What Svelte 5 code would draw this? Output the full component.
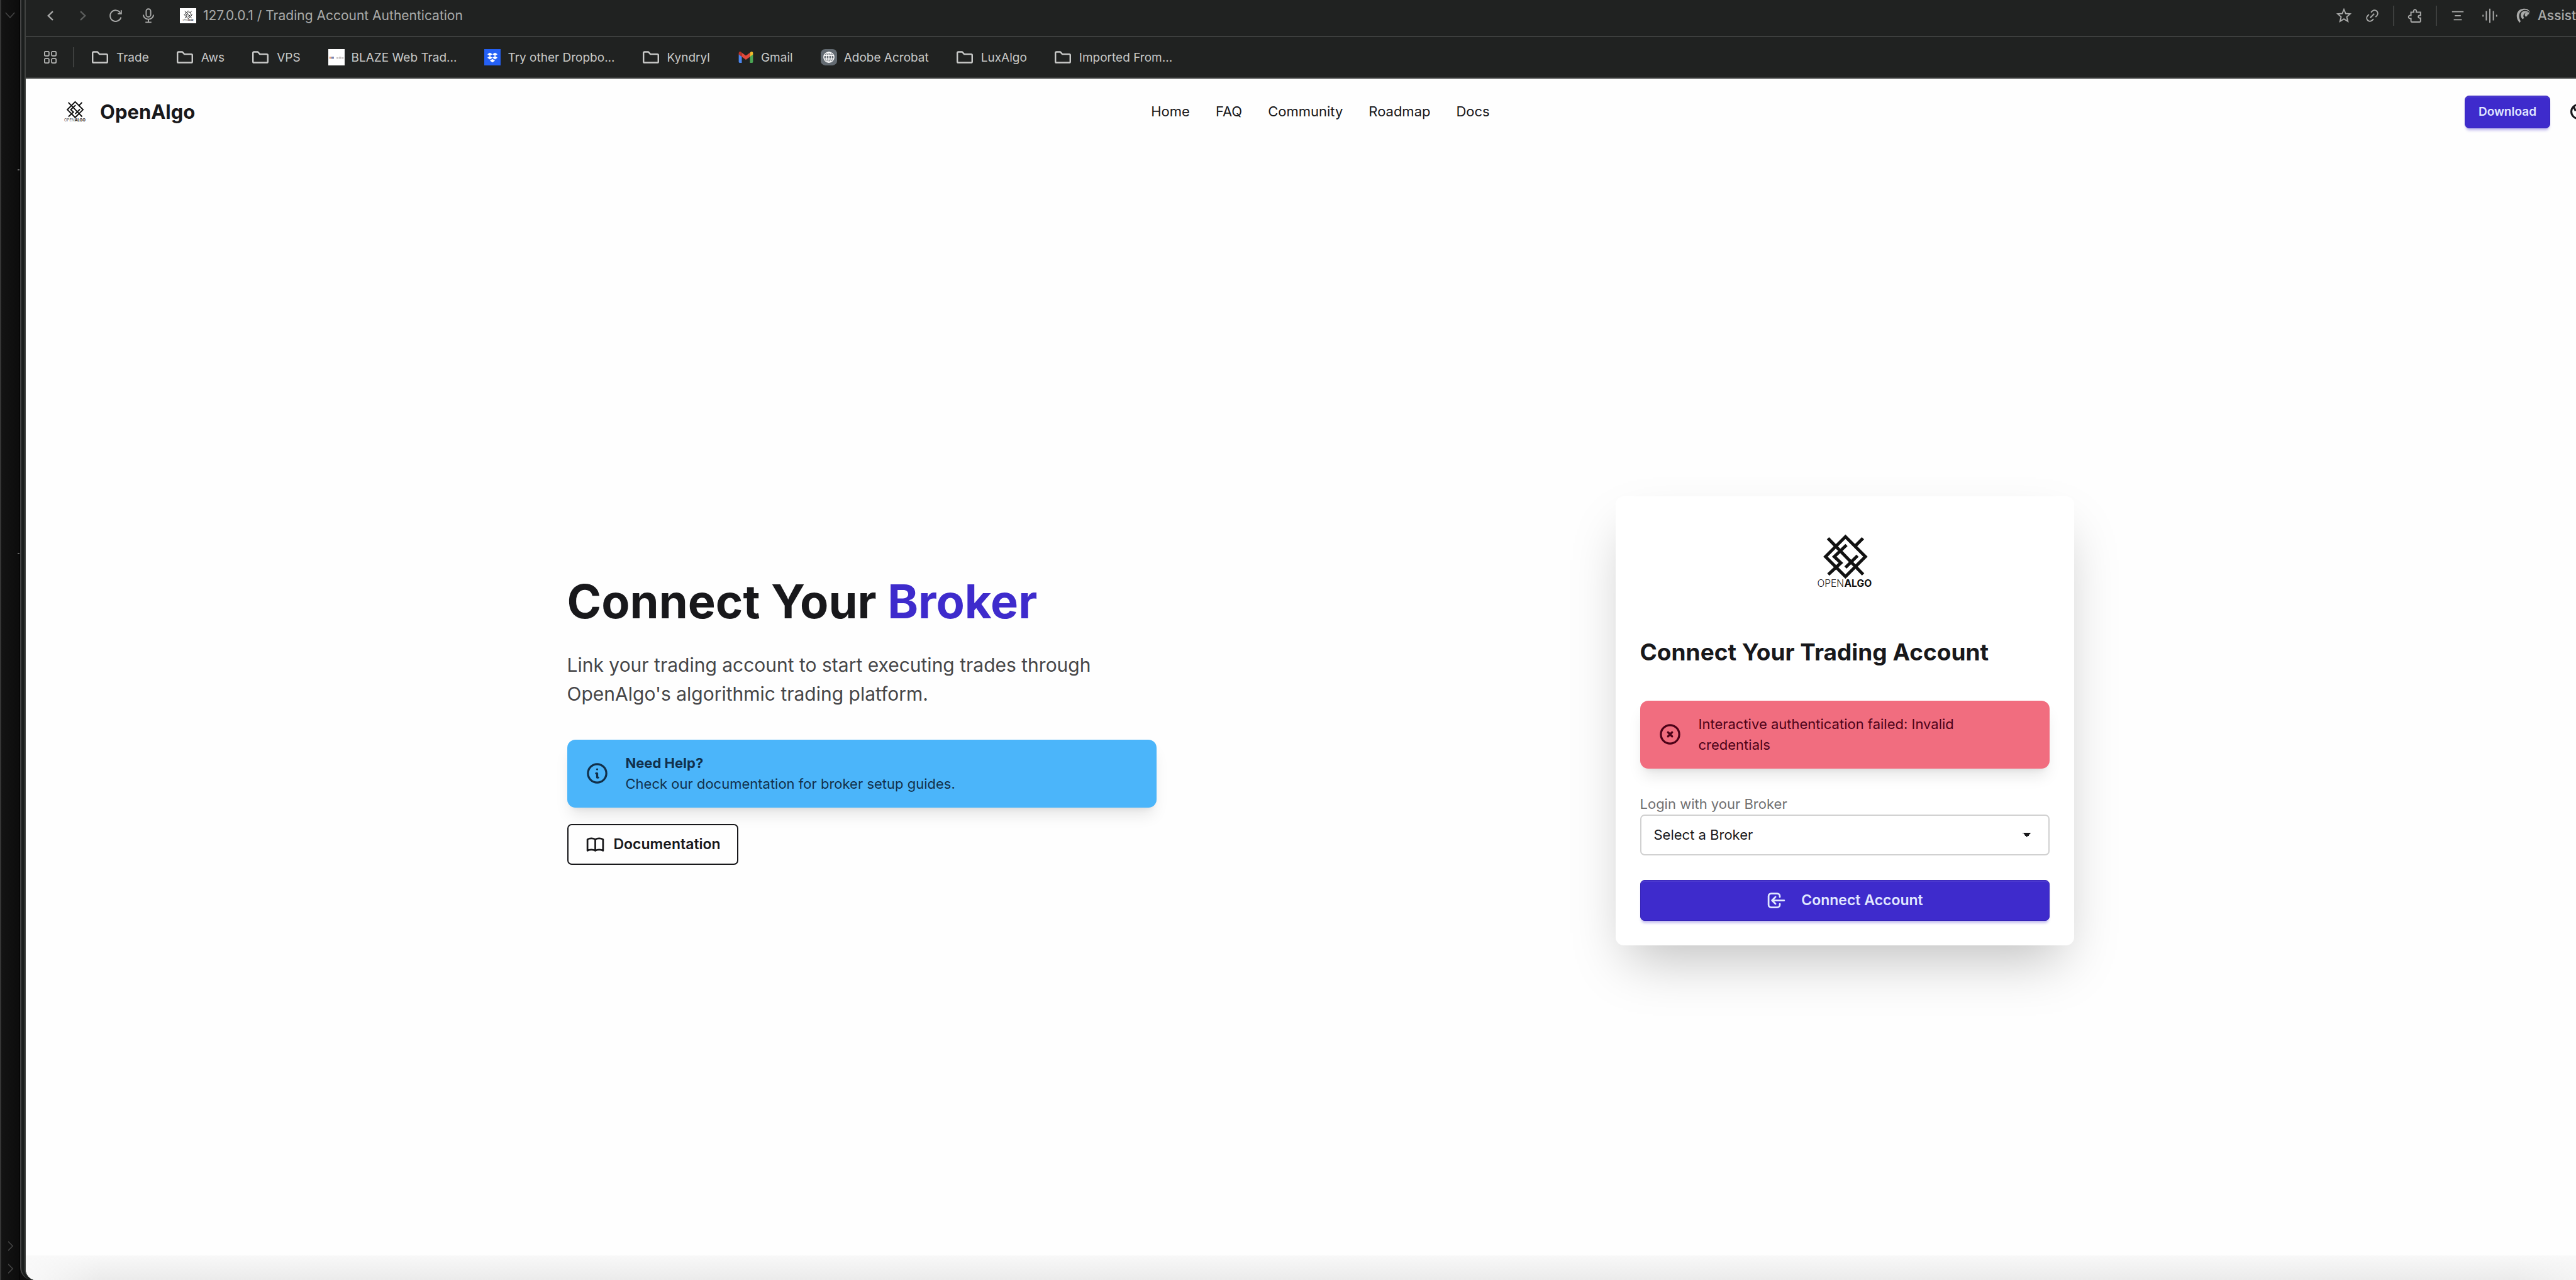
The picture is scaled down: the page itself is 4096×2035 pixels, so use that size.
<script>
  const bookmarks = [
    { label: 'Trade', icon: 'folder' },
    { label: 'Aws', icon: 'folder' },
    { label: 'VPS', icon: 'folder' },
    { label: 'BLAZE Web Trad...', icon: 'blaze' },
    { label: 'Try other Dropbo...', icon: 'dropbox' },
    { label: 'Kyndryl', icon: 'folder' },
    { label: 'Gmail', icon: 'gmail' },
    { label: 'Adobe Acrobat', icon: 'globe' },
    { label: 'LuxAlgo', icon: 'folder' },
    { label: 'Imported From...', icon: 'folder' }
  ];
  const links = ['Home', 'FAQ', 'Community', 'Roadmap', 'Docs'];
  let broker = $state('');
</script>

{#snippet logo()}
  <svg class="logo" viewBox="85 66 330 316" role="img" aria-label="OpenAlgo logo">
    <g fill="none" stroke="#111" stroke-width="18">
      <path d="M255 81 369 195 255 309 141 195Z" />
      <path d="M155 90 356 297M355 90 310 135M261 129 191 195 229 231 157 297M324 190 255 257" />
    </g>
    <text x="247" y="366" text-anchor="end" font-size="56" font-weight="300" fill="#222">OPEN</text>
    <text x="248" y="366" font-size="56" font-weight="700" fill="#111">ALGO</text>
  </svg>
{/snippet}

{#snippet mark(kind)}
  {#if kind === 'folder'}
    <svg class="mark" viewBox="0 0 32 32" fill="none" stroke="#c8c9c8" stroke-width="3" stroke-linejoin="round">
      <path d="M1.5 7.500a2 2 0 0 1 2-2H11l4 4.500h13.500a2 2 0 0 1 2 2V24.500a2 2 0 0 1-2 2h-25a2 2 0 0 1-2-2Z" />
    </svg>
  {:else if kind === 'blaze'}
    <svg class="mark" viewBox="0 0 32 32">
      <path d="M0 0h32v32H0z" fill="#fff" />
      <path d="M2 15h4v4H2z" fill="#e9a37c" /><path d="M6 15h5v4H6z" fill="#7684b4" />
      <path d="M16 16h4v3h-4zM21 15h4v4h-4zM26 16h4v3h-4z" fill="#c9c4c4" />
    </svg>
  {:else if kind === 'dropbox'}
    <svg class="mark" viewBox="0 0 32 32">
      <path d="M0 0h32v32H0z" fill="#2460f5" />
      <path d="M11 7l5 3.300-5 3.300-5-3.300zM21 7l5 3.300-5 3.300-5-3.300zM11 13.600l5 3.300-5 3.300-5-3.300zM21 13.600l5 3.300-5 3.300-5-3.300zM16 19.500l5 3.200-5 3.300-5-3.300z" fill="#fff" />
    </svg>
  {:else if kind === 'gmail'}
    <svg class="mark" viewBox="0 0 32 32">
      <path d="M2 10v15a2 2 0 0 0 2 2h4V14z" fill="#4a86ee" />
      <path d="M24 14v13h4a2 2 0 0 0 2-2V10z" fill="#4ba655" />
      <path d="M24 7v8l6-4.500V8c0-3-3-4-5-2z" fill="#f3bb2d" />
      <path d="M2 8v2.500L8 15V7L7 6C5 4 2 5 2 8z" fill="#b93226" />
      <path d="M8 7v8l8 6 8-6V7l-8 6z" fill="#e2483b" />
    </svg>
  {:else}
    <svg class="mark" viewBox="0 0 32 32">
      <rect width="32" height="32" rx="9" fill="#636b72" />
      <g fill="none" stroke="#fff" stroke-width="1.800">
        <circle cx="16" cy="16" r="10" /><ellipse cx="16" cy="16" rx="5" ry="10" />
        <path d="M16 6v20M7 12.500h18M7 19.500h18" />
      </g>
    </svg>
  {/if}
{/snippet}

<div class="desktop">
  <aside class="behind">
    <svg class="down" viewBox="0 0 20 12" fill="none" stroke="#444" stroke-width="2"><path d="M1 1l9 10 9-10" /></svg>
    <i class="speck first"></i>
    <i class="speck second"></i>
    <div class="chevrons">
      <svg viewBox="0 0 10 20" fill="none" stroke="#444" stroke-width="2"><path d="M0 1l9 9-9 9" /></svg>
      <svg viewBox="0 0 10 20" fill="none" stroke="#444" stroke-width="2"><path d="M0 1l9 9-9 9" /></svg>
    </div>
  </aside>

  <div class="window">
    <div class="canvas">
      <div class="toolbar">
        <button aria-label="Back"><svg viewBox="0 0 30 30"><path d="M20 6.500 11 15l9 8.500" stroke-width="3" /></svg></button>
        <button aria-label="Forward" class="dim"><svg viewBox="0 0 30 30"><path d="M10 6.500 19 15l-9 8.500" stroke-width="3" /></svg></button>
        <button aria-label="Reload"><svg viewBox="0 0 30 30"><path d="M25.500 18A11 11 0 1 1 24 9M26 4v7h-7" /></svg></button>
        <button aria-label="Voice search"><svg viewBox="0 0 30 30"><rect x="10.500" y="1.500" width="9" height="16" rx="4.500" /><path d="M5 13a10 9 0 0 0 20 0M15 22v5.500M9 28h12" /></svg></button>
        <div class="address">
          <span class="favicon">{@render logo()}</span>
          <span>127.0.0.1 / Trading Account Authentication</span>
        </div>
        <div class="tools">
          <button aria-label="Bookmark"><svg viewBox="0 0 30 30"><path d="M15 2.500l3.400 8.200 9 .7-6.800 5.900 2.200 8.900-7.800-4.800-7.800 4.800 2.200-8.900-6.800-5.900 9-.7z" /></svg></button>
          <button aria-label="Copy link"><svg viewBox="0 0 30 30"><path d="M12.500 8.500l3-3a6.400 6.400 0 0 1 9 9l-3 3M8.500 12.500l-3 3a6.400 6.400 0 0 0 9 9l3-3M11 19l8-8" /></svg></button>
          <i class="rule"></i>
          <button aria-label="Extensions"><svg viewBox="0 0 30 30"><path d="M7 8h5.500c-2-7 7-7 5 0H26v6.500c-6-1.500-6 6.500 0 5V26a1.500 1.500 0 0 1-1.500 1.500h-16A1.500 1.500 0 0 1 7 26v-5.500c-6.500 1.500-6.500-7.500 0-6z" /></svg></button>
          <i class="rule"></i>
          <button aria-label="Reader"><svg viewBox="0 0 30 30"><path d="M3.500 7h23M9 15h12M7 23h16" /></svg></button>
          <button aria-label="Listen" class="wave"><svg viewBox="0 0 30 30"><path d="M1.500 13v4M8 5.500v19M15 1v28M22 5.500v19M28.500 13v4" /></svg></button>
          <button class="assistant">
            <svg viewBox="0 0 30 30"><g fill="currentColor" stroke="none"><path d="M8 29C-2 19 1 2 16 1c7-1 12 3 13 8-4-5-10-7-16-4C5 10 6 19 10 26z" /><path d="M14 22C8 16 9 6 18 5.500c5 0 9 2 10 5-5-3-9-2-12 2-1 3-1 5 1 7z" /><path d="M20 17c-3-3-2-8 2-8 3 0 5 1 5 3-2 0-4 1-4 4z" /></g></svg>
            Assistant
          </button>
        </div>
      </div>

      <nav class="bookmarks" aria-label="Bookmarks">
        <button aria-label="Apps" class="apps">
          <svg viewBox="0 0 24 24" fill="none" stroke="#b9bab9" stroke-width="2"><rect x="1" y="1" width="8.500" height="8.500" rx="2" /><rect x="14.500" y="1" width="8.500" height="8.500" rx="2" /><rect x="1" y="14.500" width="8.500" height="8.500" rx="2" /><rect x="14.500" y="14.500" width="8.500" height="8.500" rx="2" /></svg>
        </button>
        <i class="rule"></i>
        {#each bookmarks as item}
          <a href="#top" class:folder={item.icon === 'folder'}>{@render mark(item.icon)}{item.label}</a>
        {/each}
      </nav>

      <div class="page" id="top">
        <header>
          <a class="brand" href="#top">{@render logo()}OpenAlgo</a>
          <nav class="menu" aria-label="Main">
            {#each links as link}<a href="#top">{link}</a>{/each}
          </nav>
          <div class="actions">
            <a class="primary small" href="#top">Download</a>
            <button class="theme" aria-label="Toggle theme">
              <svg viewBox="0 0 24 24" fill="none" stroke="#18181b" stroke-width="3"><circle cx="12" cy="12" r="10.500" /><path d="M5 4l3 7" /></svg>
            </button>
          </div>
        </header>

        <main>
          <section class="intro">
            <h1>Connect Your <span>Broker</span></h1>
            <p>Link your trading account to start executing trades through OpenAlgo's algorithmic trading platform.</p>
            <div class="alert info">
              <svg viewBox="0 0 24 24"><path d="M13 16h-1v-4h-1m1-4h.01M21 12a9 9 0 11-18 0 9 9 0 0118 0z" /></svg>
              <div><strong>Need Help?</strong><br />Check our documentation for broker setup guides.</div>
            </div>
            <a class="outline" href="#top">
              <svg viewBox="0 0 24 24"><path d="M12 6.253v13m0-13C10.832 5.477 9.246 5 7.500 5S4.168 5.477 3 6.253v13C4.168 18.477 5.754 18 7.500 18s3.332.477 4.500 1.253m0-13C13.168 5.477 14.754 5 16.500 5c1.747 0 3.332.477 4.500 1.253v13C19.832 18.477 18.247 18 16.500 18c-1.746 0-3.332.477-4.500 1.253" /></svg>
              Documentation
            </a>
          </section>

          <form class="card" onsubmit={(e) => e.preventDefault()}>
            {@render logo()}
            <h2>Connect Your Trading Account</h2>
            <div class="alert error" role="alert">
              <svg viewBox="0 0 24 24"><path d="M10 14l2-2m0 0l2-2m-2 2l-2-2m2 2l2 2m7-2a9 9 0 11-18 0 9 9 0 0118 0z" /></svg>
              <div>Interactive authentication failed: Invalid credentials</div>
            </div>
            <label for="broker">Login with your Broker</label>
            <select id="broker" bind:value={broker}>
              <option value="">Select a Broker</option>
            </select>
            <button class="primary" type="submit">
              <svg viewBox="0 0 24 24"><path d="M11 16l-4-4m0 0l4-4m-4 4h14m-5 4v1a3 3 0 01-3 3H6a3 3 0 01-3-3V7a3 3 0 013-3h7a3 3 0 013 3v1" /></svg>
              Connect Account
            </button>
          </form>
        </main>
        <div class="footer"></div>
      </div>
    </div>
  </div>
</div>

<style>
  :global(body) {
    background: #0e0e0e;
    font-family: Inter, 'Liberation Sans', sans-serif;
  }
  * { box-sizing: border-box; }
  button, select { font: inherit; color: inherit; margin: 0; }
  button { border: 0; padding: 0; background: none; cursor: pointer; }
  a { color: inherit; text-decoration: none; }
  svg { display: block; flex: none; }

  .desktop {
    display: flex;
    min-height: 100vh;
    overflow: hidden;
  }
  .behind {
    flex: none;
    width: 32px;
    display: flex;
    flex-direction: column;
    padding: 19px 0 10px;
    border-left: 2px solid #363636;
    border-right: 1px solid #000;
    background: linear-gradient(90deg, #131313, #0c0c0c);
  }
  .down { width: 16px; height: 10px; margin-left: 6px; }
  .speck {
    width: 3px;
    height: 2px;
    margin-left: auto;
    background: #666;
  }
  .first { margin-top: 240px; }
  .second { margin-top: 608px; }
  .chevrons {
    margin-top: auto;
    margin-left: 11px;
    display: grid;
    gap: 20px;
  }
  .chevrons svg { width: 8px; height: 16px; }

  .window {
    flex: 1;
    min-width: 0;
    display: flex;
    overflow: hidden;
    border-left: 2px solid #454545;
    border-bottom-left-radius: 20px;
    padding-left: 5px;
    background: #1b1e1d;
  }
  .canvas {
    flex: none;
    width: calc(100% + 62px);
    display: flex;
    flex-direction: column;
    border-left: 2px solid #404240;
    border-bottom-left-radius: 18px;
    overflow: hidden;
    background: #202221;
  }

  .toolbar {
    height: 59px;
    display: flex;
    align-items: center;
    padding: 0 30px 8px 27px;
    gap: 28px;
    border-bottom: 2px solid #3d3f3e;
    color: #a9aaa9;
    font-size: 21px;
    white-space: nowrap;
  }
  .toolbar svg {
    width: 24px;
    height: 24px;
    fill: none;
    stroke: currentColor;
    stroke-width: 2.400;
  }
  .dim { color: #5c5e5d; }
  .address {
    display: flex;
    align-items: center;
    gap: 11px;
    margin-left: 10px;
  }
  .favicon {
    width: 26px;
    height: 24px;
    padding: 3px 4px;
    background: #fff;
  }
  .favicon .logo { width: 18px; height: 18px; }
  .favicon .logo text { stroke: none; }
  .tools {
    margin-left: auto;
    display: flex;
    align-items: center;
    gap: 21px;
  }
  .rule {
    width: 2px;
    height: 32px;
    background: #3d3f3e;
  }
  .wave { margin-left: 6px; }
  .assistant {
    display: flex;
    align-items: center;
    gap: 11px;
    margin-left: 8px;
    font-weight: 500;
  }

  .bookmarks {
    height: 66px;
    display: flex;
    align-items: center;
    gap: 44px;
    padding-left: 29px;
    border-bottom: 2px solid #3d3f3e;
    color: #c8c9c8;
    font-size: 19px;
    white-space: nowrap;
  }
  .bookmarks .rule { margin: 0 -16px 0 -18px; }
  .apps svg { width: 20px; height: 20px; }
  .bookmarks a {
    display: flex;
    align-items: center;
    gap: 11px;
  }
  .bookmarks .folder { gap: 13px; }
  .mark { width: 26px; height: 26px; }

  .page {
    flex: 1;
    display: flex;
    flex-direction: column;
    background: #fefefe;
    color: #18181b;
    font-size: 22px;
    line-height: 33px;
  }
  header {
    height: 105px;
    display: grid;
    grid-template-columns: 1fr auto 1fr;
    align-items: center;
    padding: 0 46px;
  }
  .brand {
    display: flex;
    align-items: center;
    gap: 22px;
    padding-left: 14px;
    font-size: 31px;
    font-weight: 700;
  }
  .brand .logo { width: 36px; height: 35px; }
  .menu { display: flex; gap: 41px; }
  .actions {
    display: flex;
    align-items: center;
    justify-content: flex-end;
    gap: 32px;
  }
  .theme svg { width: 25px; height: 25px; }

  .primary {
    display: flex;
    align-items: center;
    justify-content: center;
    gap: 23px;
    height: 65px;
    border: 1px solid #3725b8;
    border-radius: 7px;
    background: #3e2bcc;
    color: #e0e7ff;
    font-size: 23px;
    font-weight: 600;
    box-shadow: inset 0 2px 0 rgba(255, 255, 255, .07), 0 5px 4px -2px rgba(62, 43, 204, .35);
  }
  .small {
    height: 52px;
    padding: 0 21px;
    font-size: 19px;
  }
  .primary svg, .outline svg {
    width: 33px;
    height: 33px;
    fill: none;
    stroke: currentColor;
    stroke-width: 2;
    stroke-linecap: round;
    stroke-linejoin: round;
  }

  main {
    flex: 1;
    width: 100%;
    max-width: 2396px;
    margin: 0 auto;
    padding-top: 65px;
    display: flex;
    align-items: center;
    justify-content: space-between;
  }
  .intro { width: 937px; }
  h1 {
    margin: 0 0 39px;
    font-size: 74px;
    line-height: 78px;
    font-weight: 700;
  }
  h1 span { color: #3e2bcc; }
  p {
    margin: 0 0 50px;
    font-size: 30px;
    line-height: 46px;
    color: #464648;
  }
  .alert {
    display: flex;
    align-items: center;
    gap: 26px;
    min-height: 108px;
    padding: 0 28px;
    border-radius: 13px;
    box-shadow: 0 16px 24px -5px rgba(0, 0, 0, .1), 0 7px 10px -7px rgba(0, 0, 0, .1);
  }
  .error div { max-width: 500px; }
  .alert svg {
    width: 39px;
    height: 39px;
    fill: none;
    stroke: currentColor;
    stroke-width: 2;
    stroke-linecap: round;
    stroke-linejoin: round;
  }
  .info { background: #4bb5fa; color: #12304a; }
  .error { background: #f16d7f; color: #4d0218; }
  strong { font-weight: 700; }
  .outline {
    display: inline-flex;
    align-items: center;
    gap: 13px;
    height: 65px;
    margin-top: 26px;
    padding: 0 26px;
    border: 2px solid #18181b;
    border-radius: 7px;
    font-size: 23px;
    font-weight: 600;
  }

  .card {
    display: flex;
    flex-direction: column;
    width: 729px;
    padding: 39px;
    border-radius: 13px;
    background: #fff;
    box-shadow: 0 41px 81px -20px rgba(0, 0, 0, .25);
  }
  .card .logo {
    width: 92px;
    height: 88px;
    margin: 21px auto 74px;
  }
  h2 {
    margin: 0 0 51px;
    font-size: 37px;
    line-height: 52px;
    font-weight: 700;
  }
  label {
    margin-top: 39px;
    line-height: 34px;
    color: #707072;
  }
  select {
    appearance: none;
    height: 65px;
    margin-bottom: 39px;
    padding: 0 20px;
    border: 2px solid #d1d1d1;
    border-radius: 7px;
    background:
      linear-gradient(45deg, transparent 50%, #18181b 50%) right 34px center / 7px 7px no-repeat,
      linear-gradient(135deg, #18181b 50%, transparent 50%) right 27px center / 7px 7px no-repeat,
      #fff;
  }
  .footer {
    height: 39px;
    background:
      linear-gradient(90deg, #f9f9f9, transparent 120px calc(100% - 160px), #f9f9f9),
      linear-gradient(#f8f8f8, #ebebeb);
  }
</style>
